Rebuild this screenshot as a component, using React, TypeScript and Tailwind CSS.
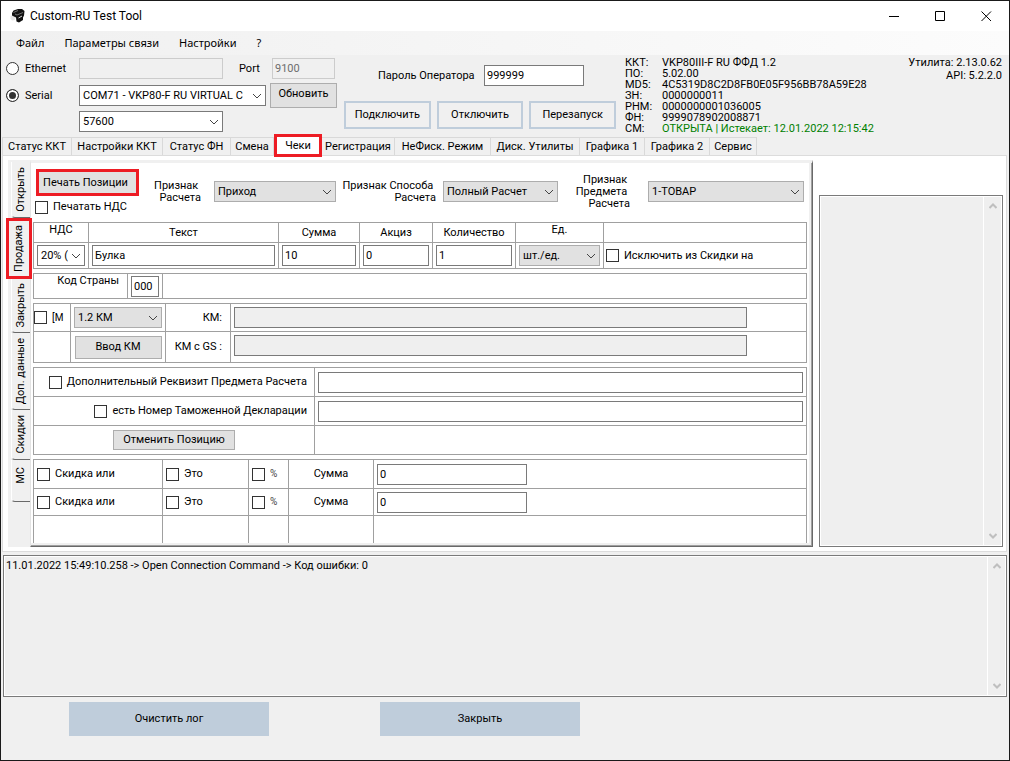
import { useState } from "react";
import type { ReactNode } from "react";

const line = "border-[#a0a0a0]";

function Chevron({ className = "" }: { className?: string }) {
  return (
    <svg viewBox="0 0 10 6" className={`h-[6px] w-[10px] ${className}`} fill="none" stroke="currentColor" aria-hidden="true">
      <path d="M1 1 L5 5 L9 1" />
    </svg>
  );
}

function Drop({ id, label, value, options = [], gray = false, className = "" }: {
  id: string; label?: string; value: string; options?: string[]; gray?: boolean; className?: string;
}) {
  const look = gray ? "border-[#adadad] bg-[#e1e1e1]" : "border-[#7a7a7a] bg-white";
  return (
    <div className={`relative ${className}`}>
      <select id={id} aria-label={label} defaultValue={value} className={`block h-[21px] w-full appearance-none overflow-hidden border pr-4 pl-[3px] ${look}`}>
        {[value, ...options].map((o) => <option key={o}>{o}</option>)}
      </select>
      <Chevron className="pointer-events-none absolute top-[8px] right-[4px] text-[#444]" />
    </div>
  );
}

function Field({ id, label, value = "", off = false, className = "" }: {
  id: string; label?: string; value?: string; off?: boolean; className?: string;
}) {
  const look = off ? "bg-[#efefef]" : "bg-white";
  return <input id={id} aria-label={label} defaultValue={value} readOnly={off} className={`block h-[21px] min-w-0 border border-[#7a7a7a] px-[2px] ${look} ${className}`} />;
}

function Check({ id, children, className = "" }: { id: string; children?: ReactNode; className?: string }) {
  return (
    <label htmlFor={id} className={`flex items-center gap-[5px] whitespace-nowrap ${className}`}>
      <input id={id} type="checkbox" className="size-[13px] shrink-0 appearance-none border border-[#333] bg-white checked:bg-[#333]" />
      {children}
    </label>
  );
}

function Push({ children, className = "" }: { children: ReactNode; className?: string }) {
  return <button type="button" className={`border border-[#adadad] bg-[#e1e1e1] ${className}`}>{children}</button>;
}

function Cell({ children, className = "" }: { children?: ReactNode; className?: string }) {
  return <div className={`flex min-w-0 overflow-hidden border-r border-b px-[3px] ${line} ${className}`}>{children}</div>;
}

function Box({ children, className = "" }: { children: ReactNode; className?: string }) {
  return <div className={`grid border-t border-l ${line} ${className}`}>{children}</div>;
}

function ScrollBar() {
  return (
    <div className="flex w-[18px] shrink-0 flex-col items-center justify-between border-l border-white py-[6px] text-[#bfbfbf]" aria-hidden="true">
      <svg viewBox="0 0 8 6" className="h-[6px] w-[8px]" fill="none" stroke="currentColor" strokeWidth="2"><path d="M0.5 5 L4 1.5 L7.5 5" /></svg>
      <svg viewBox="0 0 8 6" className="h-[6px] w-[8px]" fill="none" stroke="currentColor" strokeWidth="2"><path d="M0.5 1 L4 4.5 L7.5 1" /></svg>
    </div>
  );
}

function Output({ label, value, className = "" }: { label: string; value: string; className?: string }) {
  return (
    <div className={`flex border border-[#7a7a7a] bg-white p-px ${className}`}>
      <div className="flex flex-1 bg-[#efefef]">
        <textarea aria-label={label} readOnly value={value} className="block min-w-0 flex-1 resize-none overflow-hidden px-px py-px leading-[15px] outline-none" />
        <ScrollBar />
      </div>
    </div>
  );
}

function Logo() {
  return (
    <svg viewBox="0 0 16 16" className="size-4" aria-hidden="true">
      <path d="M0.5 8 L4 7 L5.5 9 L5 12 L2 12.5 L0.5 11 Z" fill="#e4e4e4" />
      <path d="M2 5 L3.5 2.5 L8 1 L12 1 L14.5 3 L14 7.5 L13 9.5 L13 12 L9 14.5 L6.5 13.5 L6 9.5 L2 7.5 Z" fill="#111" />
      <path d="M3.5 4.5 L8 2.5 M5 6 L7 7 L13 4.5" stroke="#888" strokeWidth="0.8" fill="none" />
      <path d="M8.5 10 L12 8" stroke="#ddd" strokeWidth="1" />
    </svg>
  );
}

const tabs = [
  { name: "Статус ККТ", w: "w-[70px]" },
  { name: "Настройки ККТ", w: "w-[91px]" },
  { name: "Статус ФН", w: "w-[68px]" },
  { name: "Смена", w: "w-[43px]" },
  { name: "Чеки", w: "w-[48px]" },
  { name: "Регистрация", w: "w-[73px]" },
  { name: "НеФиск. Режим", w: "w-[96px]" },
  { name: "Диск. Утилиты", w: "w-[89px]" },
  { name: "Графика 1", w: "w-[65px]" },
  { name: "Графика 2", w: "w-[65px]" },
  { name: "Сервис", w: "w-[47px]" },
];

const sideTabs = [
  { name: "Открыть", h: "h-[56px]" },
  { name: "Продажа", h: "h-[61px]" },
  { name: "Закрыть", h: "h-[54px]" },
  { name: "Доп. данные", h: "h-[77px]" },
  { name: "Скидки", h: "h-[50px]" },
  { name: "МС", h: "h-[42px] pb-[10px]" },
];

const device = [
  ["ККТ:", "VKP80III-F RU ФФД 1.2"],
  ["ПО:", "5.02.00"],
  ["MD5:", "4C5319D8C2D8FB0E05F956BB78A59E28"],
  ["ЗН:", "0000000011"],
  ["РНМ:", "0000000001036005"],
  ["ФН:", "9999078902008871"],
  ["СМ:", "ОТКРЫТА | Истекает: 12.01.2022 12:15:42"],
];

function TitleBar() {
  return (
    <header className="flex h-[30px] items-center bg-white pl-[9px]">
      <Logo />
      <h1 className="ml-[4px] text-[12px]">Custom-RU Test Tool</h1>
      <div className="ml-auto flex">
        <button type="button" aria-label="Свернуть" className="flex h-[30px] w-[46px] items-center justify-center">
          <svg viewBox="0 0 11 11" className="size-[11px]" stroke="#000"><path d="M0 5.5 H10" /></svg>
        </button>
        <button type="button" aria-label="Развернуть" className="flex h-[30px] w-[46px] items-center justify-center">
          <svg viewBox="0 0 11 11" className="size-[11px]" fill="none" stroke="#000"><path d="M0.5 0.5 H9.5 V9.5 H0.5 Z" /></svg>
        </button>
        <button type="button" aria-label="Закрыть окно" className="flex h-[30px] w-[46px] items-center justify-center">
          <svg viewBox="0 0 11 11" className="size-[11px]" stroke="#000"><path d="M0.5 0.5 L10 10 M10 0.5 L0.5 10" /></svg>
        </button>
      </div>
    </header>
  );
}

function Connection() {
  const [mode, setMode] = useState("serial");
  const radio = "size-[13px] shrink-0 appearance-none rounded-full border border-[#333] bg-white checked:bg-[#333] checked:shadow-[inset_0_0_0_2px_white]";
  return (
    <section className="flex h-[82px] items-start">
      <div className="flex w-[336px] shrink-0 flex-col pt-[3px] pl-[5px]">
        <div className="flex items-center">
          <label className="flex w-[73px] items-center gap-[6px]">
            <input type="radio" name="mode" checked={mode === "ethernet"} onChange={() => setMode("ethernet")} className={radio} />Ethernet
          </label>
          <input aria-label="IP" disabled className="h-[21px] w-[144px] border border-[#ccc] bg-[#f0f0f0]" />
          <label htmlFor="port" className="ml-[16px] w-[33px]">Port</label>
          <input id="port" disabled defaultValue="9100" className="h-[21px] w-[63px] border border-[#ccc] bg-[#f0f0f0] px-[2px] text-[#6d6d6d]" />
        </div>
        <div className="mt-[4px] flex items-center">
          <label className="flex w-[73px] items-center gap-[6px]">
            <input type="radio" name="mode" checked={mode === "serial"} onChange={() => setMode("serial")} className={radio} />Serial
          </label>
          <Drop id="com" label="COM порт" value="COM71 - VKP80-F RU VIRTUAL C" className="w-[187px]" />
          <Push className="ml-[4px] h-[25px] w-[67px] pb-1">Обновить</Push>
        </div>
        <Drop id="baud" label="Скорость" value="57600" options={["9600", "115200"]} className="mt-[3px] ml-[73px] w-[144px]" />
      </div>
      <div className="ml-[7px] flex w-[272px] shrink-0 flex-col pt-[10px]">
        <div className="flex items-center">
          <label htmlFor="pwd" className="w-[140px] pl-[34px] whitespace-nowrap">Пароль Оператора</label>
          <Field id="pwd" value="999999" className="w-[100px]" />
        </div>
        <div className="mt-[15px] grid grid-cols-3 gap-[6px]">
          {["Подключить", "Отключить", "Перезапуск"].map((t) => (
            <button key={t} type="button" className="h-[28px] border-2 border-[#bfcddb]">{t}</button>
          ))}
        </div>
      </div>
      <dl className="ml-[9px] grid grid-cols-[37px_auto] pt-[2px] leading-[11px] whitespace-nowrap">
        {device.map(([k, v]) => (
          <div key={k} className="contents">
            <dt>{k}</dt>
            <dd className={k === "СМ:" ? "text-[#008000]" : ""}>{v}</dd>
          </div>
        ))}
      </dl>
      <p className="ml-auto pt-px pr-[7px] text-right leading-[13px]">Утилита: 2.13.0.62<br />API: 5.2.2.0</p>
    </section>
  );
}

function SideTabs({ active, pick }: { active: string; pick: (s: string) => void }) {
  return (
    <div role="tablist" aria-orientation="vertical" className="flex w-[22px] shrink-0 flex-col items-end bg-[#f0f0f0] pt-[2px]">
      {sideTabs.map((t) => (
        <button
          key={t.name}
          type="button"
          role="tab"
          aria-selected={active === t.name}
          onClick={() => pick(t.name)}
          className={`flex items-center justify-center ${t.h} ${
            active === t.name
              ? "relative -mr-[2px] w-[26px] border-3 border-[#ed1c24]"
              : "w-[19px] rounded-bl-sm border-b border-l border-b-[#696969] border-l-white"
          }`}
        >
          <span className="rotate-180 whitespace-nowrap [writing-mode:vertical-rl]">{t.name}</span>
        </button>
      ))}
    </div>
  );
}

function Goods() {
  const mark = "text-right leading-[12px] whitespace-pre";
  return (
    <div className="grid min-w-0 flex-1 content-start gap-[4px] border-t-3 border-r border-b border-l border-t-[#f0f0f0] border-r-[#696969] border-b-[#696969] border-l-[#e3e3e3] bg-white pr-[5px] pb-[3px] pl-[2px] shadow-[inset_-1px_-1px_0_#a0a0a0,inset_-3px_-3px_0_#f0f0f0]">
      <div className="flex h-[55px] items-start">
        <div className="flex w-[108px] shrink-0 flex-col pt-[6px] pl-[2px]">
          <button type="button" className="ml-px h-[27px] w-[103px] border-3 border-[#ed1c24] bg-[#e1e1e1] pr-[4px]">Печать Позиции</button>
          <Check id="printVat" className="mt-[4px]">Печатать НДС</Check>
        </div>
        <label htmlFor="sign" className={`mt-[17px] w-[60px] ${mark}`}>{"Признак \nРасчета"}</label>
        <Drop id="sign" value="Приход" options={["Расход"]} gray className="mt-[18px] ml-[13px] w-[122px]" />
        <label htmlFor="way" className={`mt-[17px] w-[100px] ${mark}`}>{"Признак Способа \nРасчета"}</label>
        <Drop id="way" value="Полный Расчет" options={["Аванс"]} gray className="mt-[18px] ml-[7px] w-[115px]" />
        <label htmlFor="subject" className={`mt-[11px] w-[72px] ${mark}`}>{"Признак \nПредмета \nРасчета"}</label>
        <Drop id="subject" value="1-ТОВАР" options={["2-УСЛУГА"]} gray className="mt-[18px] ml-[18px] w-[156px]" />
      </div>

      <Box className="grid-cols-[55px_190px_81px_73px_83px_88px_1fr] grid-rows-[20px_26px]">
        <Cell className="justify-center"><label htmlFor="vat">НДС</label></Cell>
        <Cell className="items-center justify-center"><label htmlFor="text">Текст</label></Cell>
        <Cell className="items-center justify-center"><label htmlFor="sum">Сумма</label></Cell>
        <Cell className="items-center justify-center"><label htmlFor="excise">Акциз</label></Cell>
        <Cell className="items-center justify-center"><label htmlFor="qty">Количество</label></Cell>
        <Cell className="justify-center"><label htmlFor="unit">Ед.</label></Cell>
        <Cell />
        <Cell className="items-center"><Drop id="vat" value="20% (20/120)" className="w-full" /></Cell>
        <Cell className="items-center"><Field id="text" value="Булка" className="w-full" /></Cell>
        <Cell className="items-center"><Field id="sum" value="10" className="w-full" /></Cell>
        <Cell className="items-center"><Field id="excise" value="0" className="w-full" /></Cell>
        <Cell className="items-center"><Field id="qty" value="1" className="w-full" /></Cell>
        <Cell className="items-center"><Drop id="unit" value="шт./ед." gray className="w-full" /></Cell>
        <Cell className="items-center pl-[2px]"><Check id="exclude">Исключить из Скидки на</Check></Cell>
      </Box>

      <Box className="grid-cols-[94px_35px_1fr] grid-rows-[25px]">
        <Cell className="justify-end pr-[8px]"><label htmlFor="country">Код Страны</label></Cell>
        <Cell className="items-center"><Field id="country" value="000" className="w-full" /></Cell>
        <Cell />
      </Box>

      <Box className="grid-cols-[37px_95px_65px_1fr] grid-rows-[28px_31px]">
        <Cell className="items-center pl-0"><Check id="m"><span className="text-[10px]">[М</span></Check></Cell>
        <Cell className="items-center"><Drop id="kmv" label="Версия КМ" value="1.2 КМ" gray className="w-full" /></Cell>
        <Cell className="items-center justify-end pr-[8px]"><label htmlFor="km">КМ:</label></Cell>
        <Cell className="items-center pr-[59px]"><Field id="km" off className="w-full" /></Cell>
        <Cell />
        <Cell className="items-center justify-center"><Push className="h-[23px] w-[87px]">Ввод КМ</Push></Cell>
        <Cell className="items-center justify-end pr-[8px]"><label htmlFor="kmgs">КМ с GS :</label></Cell>
        <Cell className="items-start pt-[3px] pr-[59px]"><Field id="kmgs" off className="w-full" /></Cell>
      </Box>

      <Box className="grid-cols-[281px_1fr] grid-rows-[29px_29px_29px]">
        <Cell className="items-center justify-end pr-[7px]"><Check id="req">Дополнительный Реквизит Предмета Расчета</Check></Cell>
        <Cell className="items-center"><Field id="reqText" label="Дополнительный реквизит" className="w-full" /></Cell>
        <Cell className="items-center justify-end pr-[7px]"><Check id="decl">есть Номер Таможенной Декларации</Check></Cell>
        <Cell className="items-center"><Field id="declText" label="Номер декларации" className="w-full" /></Cell>
        <Cell className="items-center justify-center"><Push className="h-[20px] w-[122px]">Отменить Позицию</Push></Cell>
        <Cell />
      </Box>

      <Box className="grid-cols-[129px_86px_40px_85px_1fr] grid-rows-[29px_27px_27px]">
        {[1, 2].map((n) => (
          <div key={n} className="contents">
            <Cell className="items-center"><Check id={`disc${n}`}>Скидка или</Check></Cell>
            <Cell className="items-center"><Check id={`is${n}`}>Это</Check></Cell>
            <Cell className="items-center"><Check id={`pct${n}`}><span className="text-[10px] text-[#444]">%</span></Check></Cell>
            <Cell className="items-center justify-center"><label htmlFor={`amount${n}`}>Сумма</label></Cell>
            <Cell className="items-center"><Field id={`amount${n}`} value="0" className="w-[150px]" /></Cell>
          </div>
        ))}
        {[1, 2, 3, 4, 5].map((n) => <div key={n} className={`border-r ${line}`} />)}
      </Box>
    </div>
  );
}

export default function App() {
  const [side, setSide] = useState("Продажа");
  const [tab, setTab] = useState("Чеки");
  return (
    <main className="flex min-h-screen flex-col border border-[#1a1a1a] bg-[#f0f0f0] font-['Roboto','Liberation_Sans',sans-serif] text-[11px] leading-[14px] text-black">
      <TitleBar />
      <nav className="flex h-[24px] items-center gap-[20px] bg-linear-to-r from-[#f0f0f0] to-[#fcfcfc] pl-[15px] font-['Noto_Sans',sans-serif]">
        {["Файл", "Параметры связи", "Настройки", "?"].map((m) => (
          <button key={m} type="button">{m}</button>
        ))}
      </nav>
      <Connection />

      <div role="tablist" className="flex h-[18px] items-end pl-px">
        {tabs.map((t) => (
          <button
            key={t.name}
            type="button"
            role="tab"
            aria-selected={tab === t.name}
            onClick={() => setTab(t.name)}
            className={`shrink-0 whitespace-nowrap ${t.w} ${
              tab === t.name
                ? "relative -mb-[2px] h-[23px] border-3 border-[#ed1c24] bg-white"
                : "h-[18px] border-t border-r border-[#d9d9d9] first:border-l"
            }`}
          >
            {t.name}
          </button>
        ))}
      </div>

      <section className="mr-[2px] ml-px flex border border-[#dcdcdc] bg-white pt-[4px] pr-[3px] pb-[4px] pl-[5px]">
        <SideTabs active={side} pick={setSide} />
        <Goods />
        <Output label="Чек" value="" className="mt-[35px] ml-[6px] w-[184px] shrink-0" />
      </section>

      <Output
        label="Журнал"
        value="11.01.2022 15:49:10.258 -> Open Connection Command -> Код ошибки: 0"
        className="mt-[3px] mr-[2px] ml-[2px] min-h-[142px] flex-1"
      />

      <footer className="flex h-[63px] shrink-0 items-start gap-[111px] pt-[5px] pl-[68px]">
        <button type="button" className="h-[34px] w-[200px] bg-[#bfcddb]">Очистить лог</button>
        <button type="button" className="h-[34px] w-[200px] bg-[#bfcddb]">Закрыть</button>
      </footer>
    </main>
  );
}
